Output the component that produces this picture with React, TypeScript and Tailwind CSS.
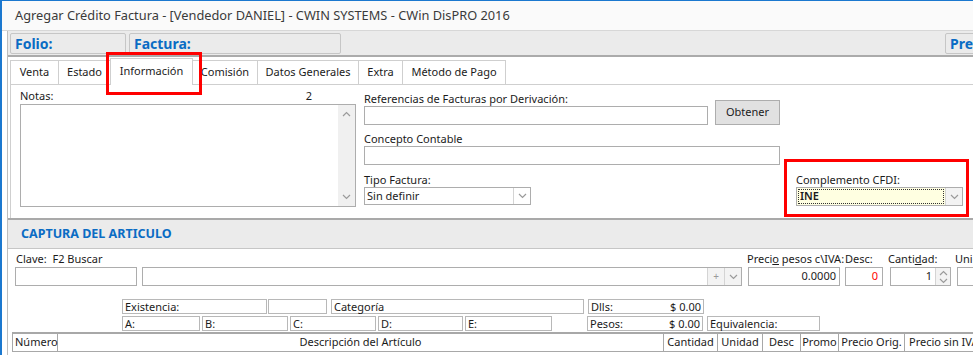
import React from 'react';

const Chevron = ({ up = false }: { up?: boolean }) => (
  <svg width="9" height="6" viewBox="0 0 9 6">
    <polyline
      points={up ? '1,5 4.5,1.5 8,5' : '1,1 4.5,4.5 8,1'}
      fill="none"
      stroke="#9a9a9a"
      strokeWidth="1.2"
    />
  </svg>
);

const tabs = [
  { label: 'Venta', w: 'w-[49px]' },
  { label: 'Estado', w: 'w-[53px]' },
  { label: 'Información', w: 'w-[83px]', active: true },
  { label: 'Comisión', w: 'w-[66px]' },
  { label: 'Datos Generales', w: 'w-[102px]' },
  { label: 'Extra', w: 'w-[45px]' },
  { label: 'Método de Pago', w: 'w-[104px]' },
];

const headers = [
  { label: 'Número', w: 'w-[45px]', align: 'justify-start pl-[2px]' },
  { label: 'Descripción del Artículo', w: 'w-[606px]', align: 'justify-center' },
  { label: 'Cantidad', w: 'w-[54px]', align: 'justify-center' },
  { label: 'Unidad', w: 'w-[45px]', align: 'justify-center' },
  { label: 'Desc', w: 'w-[38px]', align: 'justify-center' },
  { label: 'Promo', w: 'w-[38px]', align: 'justify-center' },
  { label: 'Precio Orig.', w: 'w-[66px]', align: 'justify-center' },
  { label: 'Precio sin IVA', w: 'w-[100px]', align: 'justify-start pl-[4px]' },
];

const Box = ({ w, children, right }: { w: string; children?: React.ReactNode; right?: string }) => (
  <div className={`${w} shrink-0 h-[15px] border border-[#b8b8b8] flex items-center justify-between px-[2px] leading-none`}>
    <span>{children}</span>
    {right && <span>{right}</span>}
  </div>
);

export default function App() {
  return (
    <div className="relative w-[973px] h-[355px] overflow-hidden font-['Noto_Sans',sans-serif] text-[11px] text-[#1b1b1b]">
      <div className="w-full h-full bg-white border-t border-l-2 border-[#1b78cf] flex flex-col">
        {/* title bar */}
        <div className="h-[30px] shrink-0 bg-[#fafafa] border-b border-[#d7d7d7] pl-[13px] flex items-center text-[12.8px] text-[#3a3a3a] whitespace-nowrap">
          Agregar Crédito Factura - [Vendedor DANIEL] - CWIN SYSTEMS - CWin DisPRO 2016
        </div>

        <div className="flex flex-1 min-h-0">
          <div className="w-[5px] shrink-0" />
          <div className="flex-1 border-l border-[#bdbdbd] flex flex-col min-w-0 overflow-hidden">
            {/* toolbar */}
            <div className="h-[26px] shrink-0 bg-[#ebebeb] border-b-2 border-[#ababab] flex items-start pt-[2px] pl-[2px]">
              <div className="w-[116px] shrink-0 h-[21px] border border-[#c6c6c6] rounded-[2px] flex items-center pl-[4px] text-[14px] font-bold text-[#0a6cc4]">
                Folio:
              </div>
              <div className="w-[212px] shrink-0 h-[21px] ml-[3px] border border-[#c6c6c6] rounded-[2px] flex items-center pl-[4px] text-[14px] font-bold text-[#0a6cc4]">
                Factura:
              </div>
              <div className="w-[60px] h-[21px] ml-[604px] shrink-0 border border-[#c6c6c6] rounded-[2px] flex items-center pl-[4px] text-[14px] font-bold text-[#0a6cc4]">
                Precio
              </div>
            </div>

            {/* tabs */}
            <div className="h-[163px] shrink-0 border-b-2 border-[#a9a9a9] flex flex-col">
              <div className="h-[27px] shrink-0 flex items-end pl-[3px]">
                {tabs.map((t) =>
                  t.active ? (
                    <div
                      key={t.label}
                      className={`${t.w} shrink-0 h-[27px] -mb-px -ml-px relative z-10 bg-white border-t border-l border-r border-[#cfcfcf] flex items-start justify-center pt-[4px]`}
                    >
                      {t.label}
                    </div>
                  ) : (
                    <div
                      key={t.label}
                      className={`${t.w} shrink-0 h-[24px] -ml-px bg-white border-t border-l border-r border-[#cfcfcf] flex items-center justify-center`}
                    >
                      {t.label}
                    </div>
                  )
                )}
              </div>
              <div className="flex-1 ml-[2px] border-t border-l border-[#cfcfcf] flex">
                {/* notas */}
                <div className="w-[336px] ml-[9px] pt-[3px] shrink-0">
                  <div className="h-[16px] flex items-center justify-between pr-[44px]">
                    <span>Notas:</span>
                    <span>2</span>
                  </div>
                  <div className="h-[103px] border border-[#adadad] flex justify-end">
                    <div className="w-[17px] bg-[#f0f0f0] flex flex-col items-center justify-between py-[6px]">
                      <Chevron up />
                      <Chevron />
                    </div>
                  </div>
                </div>

                {/* right side */}
                <div className="ml-[8px] flex flex-col pt-[6px] shrink-0">
                  <div className="flex items-end">
                    <div className="flex flex-col">
                      <div className="h-[15px] leading-[15px]">Referencias de Facturas por Derivación:</div>
                      <div className="w-[344px] h-[19px] border border-[#adadad]" />
                    </div>
                    <div className="w-[65px] h-[25px] ml-[7px] bg-[#e1e1e1] border border-[#adadad] flex items-center justify-center">
                      Obtener
                    </div>
                  </div>
                  <div className="h-[15px] leading-[15px] mt-[6px]">Concepto Contable</div>
                  <div className="w-[416px] h-[19px] border border-[#adadad]" />
                  <div className="flex mt-[7px]">
                    <div className="flex flex-col shrink-0">
                      <div className="h-[15px] leading-[15px]">Tipo Factura:</div>
                      <div className="w-[167px] h-[18px] border border-[#adadad] flex">
                        <div className="flex-1 pl-[2px] flex items-center">Sin definir</div>
                        <div className="w-[17px] border-l border-[#d4d4d4] flex items-center justify-center">
                          <Chevron />
                        </div>
                      </div>
                    </div>
                    <div className="flex flex-col ml-[265px] shrink-0">
                      <div className="h-[15px] leading-[15px]">Complemento CFDI:</div>
                      <div className="w-[167px] h-[19px] border border-[#adadad] flex">
                        <div className="flex-1 bg-[#ffffe1] p-px flex">
                          <div className="flex-1 border border-dotted border-[#333] flex items-center pl-px font-semibold">INE</div>
                        </div>
                        <div className="w-[17px] border-l border-[#d4d4d4] bg-[#f3f3f3] flex items-center justify-center">
                          <Chevron />
                        </div>
                      </div>
                    </div>
                  </div>
                </div>
              </div>
            </div>

            {/* captura */}
            <div className="h-[29px] shrink-0 bg-[#ebebeb] border-b border-[#c6c6c6] flex items-center pl-[13px] text-[12.5px] font-bold text-[#0a6cc4]">
              CAPTURA DEL ARTICULO
            </div>

            <div className="flex pt-[2px] pl-[7px]">
              <div className="flex flex-col w-[122px] shrink-0">
                <div className="h-[16px] pl-[1px] whitespace-nowrap flex items-center">Clave:&nbsp; F2 Buscar</div>
                <div className="h-[19px] border border-[#adadad]" />
              </div>
              <div className="flex flex-col w-[600px] ml-[5px] shrink-0">
                <div className="h-[16px]" />
                <div className="h-[19px] border border-[#adadad] flex justify-end">
                  <div className="w-[17px] border-l border-[#d4d4d4] bg-[#f3f3f3] flex items-center justify-center text-[#999] text-[10px]">+</div>
                  <div className="w-[17px] border-l border-[#d4d4d4] bg-[#f3f3f3] flex items-center justify-center">
                    <Chevron />
                  </div>
                </div>
              </div>
              <div className="flex flex-col w-[92px] ml-[6px] shrink-0">
                <div className="h-[16px] -ml-px whitespace-nowrap flex items-center">
                  Preci<span className="underline">o</span>&nbsp;pesos c\IVA:
                </div>
                <div className="h-[19px] border border-[#adadad] flex items-center justify-end pr-[3px]">0.0000</div>
              </div>
              <div className="flex flex-col w-[38px] ml-[5px] shrink-0">
                <div className="h-[16px] whitespace-nowrap flex items-center">Desc:</div>
                <div className="h-[19px] border border-[#adadad] flex items-center justify-end pr-[4px] text-[#ff0000]">0</div>
              </div>
              <div className="flex flex-col w-[61px] ml-[7px] shrink-0">
                <div className="h-[16px] -ml-[2px] whitespace-nowrap flex items-center">
                  Canti<span className="underline">d</span>ad:
                </div>
                <div className="h-[19px] border border-[#adadad] flex">
                  <div className="flex-1 flex items-center justify-end pr-[3px]">1</div>
                  <div className="w-[15px] border-l border-[#d4d4d4] bg-[#f3f3f3] flex flex-col items-center justify-center gap-[2px]">
                    <Chevron up />
                    <Chevron />
                  </div>
                </div>
              </div>
              <div className="flex flex-col w-[40px] ml-[6px] shrink-0">
                <div className="h-[16px] -ml-[2px] whitespace-nowrap flex items-center">Unidad:</div>
                <div className="h-[19px] border border-[#adadad]" />
              </div>
            </div>

            {/* existencia */}
            <div className="flex flex-col gap-[2px] mt-[13px] pl-[114px]">
              <div className="flex">
                <Box w="w-[145px]">Existencia:</Box>
                <Box w="w-[59px] ml-[1px]" />
                <Box w="w-[253px] ml-[4px]">Categoría</Box>
                <Box w="w-[116px] ml-[4px]" right="$ 0.00">Dlls:</Box>
              </div>
              <div className="flex">
                <Box w="w-[78px]">A:</Box>
                <Box w="w-[86px] ml-[2px]">B:</Box>
                <Box w="w-[86px] ml-[2px]">C:</Box>
                <Box w="w-[85px] ml-[2px]">D:</Box>
                <Box w="w-[87px] ml-[2px]">E:</Box>
                <Box w="w-[116px] ml-[35px]" right="$ 0.00">Pesos:</Box>
                <Box w="w-[113px] ml-[4px]">Equivalencia:</Box>
              </div>
            </div>

            {/* table header */}
            <div className="flex ml-[4px] mt-[1px] border-t-2 border-l border-b border-[#a8a8a8] h-[20px] shrink-0">
              {headers.map((h) => (
                <div
                  key={h.label}
                  className={`${h.w} shrink-0 border-r border-[#a8a8a8] flex items-center whitespace-nowrap ${h.align}`}
                >
                  {h.label}
                </div>
              ))}
            </div>
          </div>
        </div>
      </div>

      {/* highlight boxes */}
      <div className="absolute left-[106px] top-[52px] w-[96px] h-[43px] border-[3px] border-[#ff0000] z-20" />
      <div className="absolute left-[784px] top-[159px] w-[185px] h-[58px] border-[3px] border-[#ff0000] z-20" />
    </div>
  );
}
